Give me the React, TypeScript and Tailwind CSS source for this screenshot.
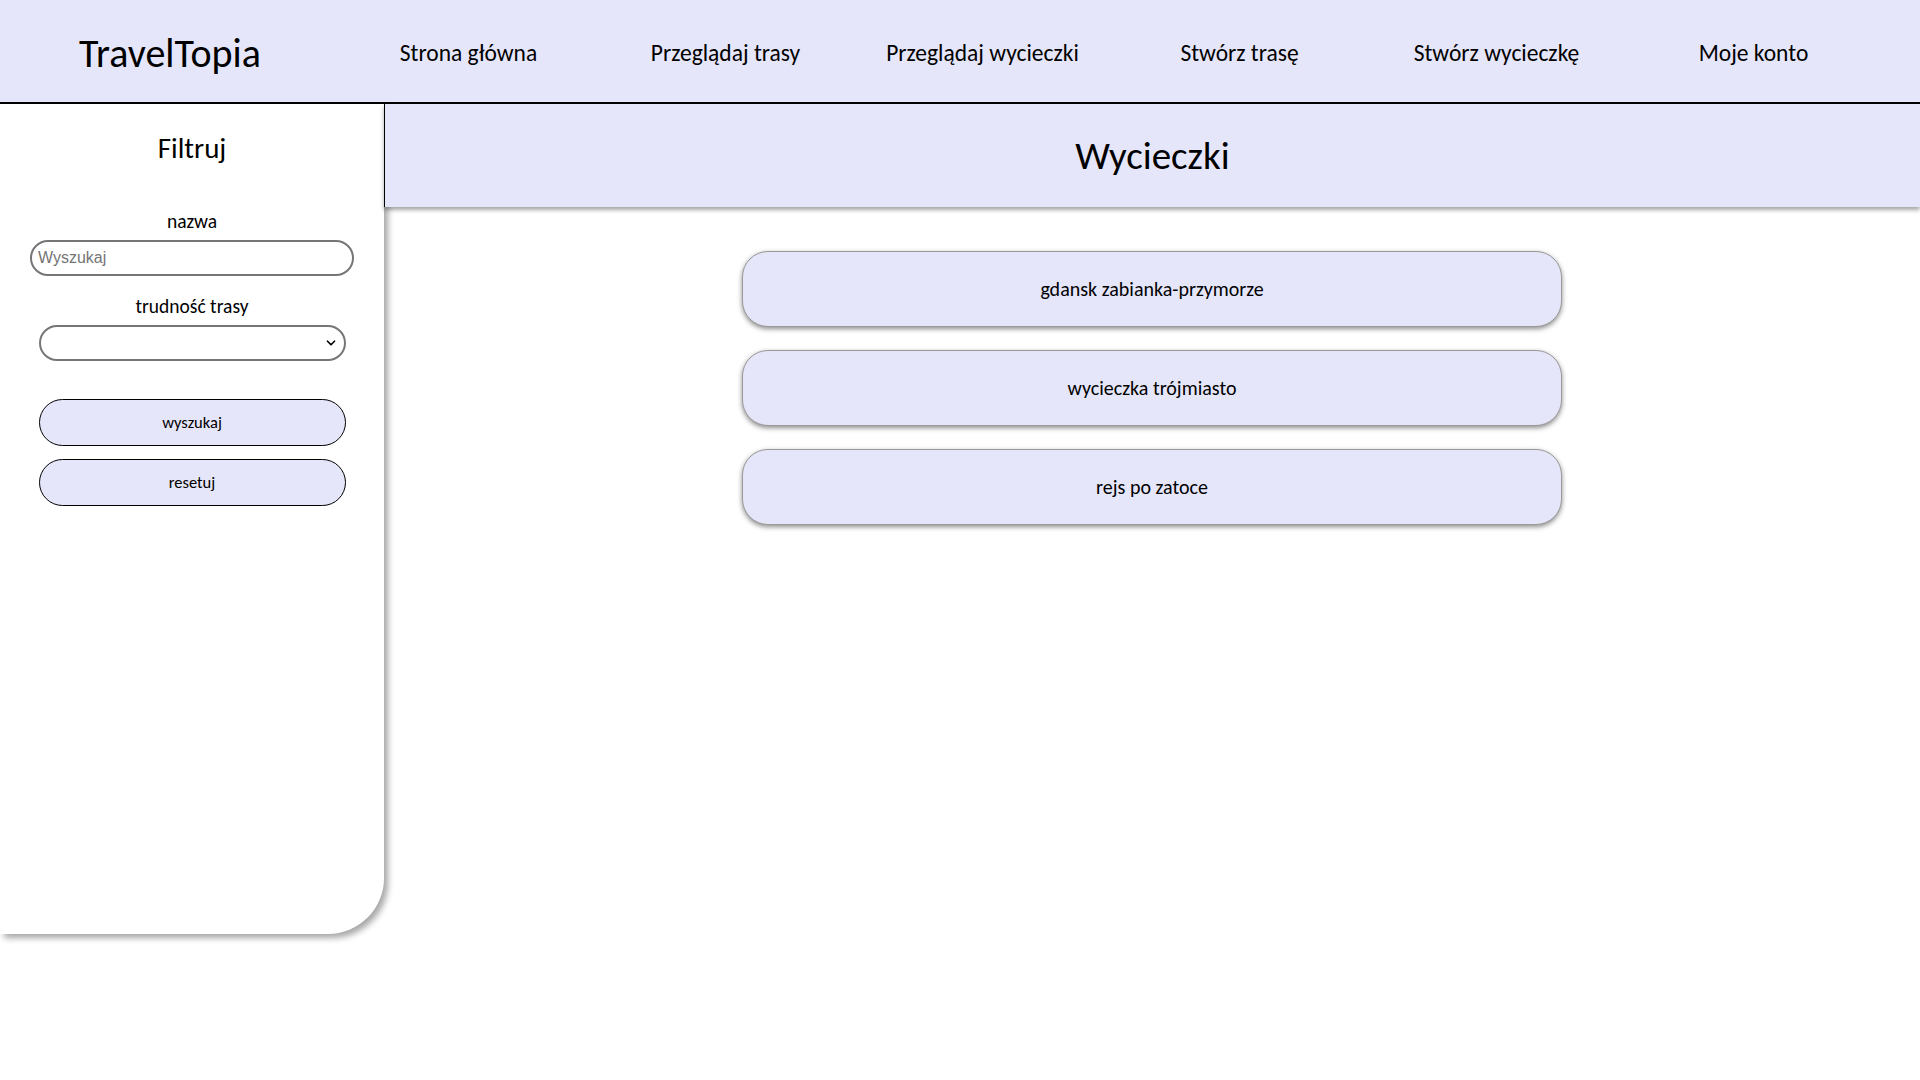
import { ChevronDown } from "lucide-react";

const navItems = [
  "Strona główna",
  "Przeglądaj trasy",
  "Przeglądaj wycieczki",
  "Stwórz trasę",
  "Stwórz wycieczkę",
  "Moje konto",
];

const trips = ["gdansk zabianka-przymorze", "wycieczka trójmiasto", "rejs po zatoce"];

const font = "[font-family:Carlito,Calibri,Lato,sans-serif]";

export default function App() {
  return (
    <div className={`min-h-screen w-full bg-white text-black ${font}`}>
      <header className="flex h-[104px] items-center border-b-2 border-black bg-[#e6e6fa] pt-[5px]">
        <div className="flex w-[340px] justify-center text-[40px] leading-none">TravelTopia</div>
        <nav className="flex">
          {navItems.map((item) => (
            <a key={item} href="#" className="w-[257px] text-center text-[23.5px]">
              {item}
            </a>
          ))}
        </nav>
      </header>

      <div className="flex items-start">
        <aside className="relative z-0 flex h-[830px] w-[384px] shrink-0 flex-col items-center rounded-br-[56px] bg-white shadow-[4px_4px_6px_rgba(0,0,0,0.35)]">
          <h2 className="mt-[30px] text-[29px] leading-none">Filtruj</h2>

          <label className="mt-[49px] text-[19.5px] leading-none">nazwa</label>
          <input
            type="text"
            placeholder="Wyszukaj"
            className="mt-[8px] h-[36px] w-[324px] rounded-full border-2 border-[#767676] px-[6px] text-[16px] [font-family:'Liberation_Sans',Arial,sans-serif] placeholder:text-[#757575] focus:outline-none"
          />

          <label className="mt-[21px] text-[19.5px] leading-none">trudność trasy</label>
          <div className="relative mt-[9px] w-[307px]">
            <select className="h-[36px] w-full appearance-none rounded-full border-2 border-[#767676] bg-white px-3 focus:outline-none">
              <option value=""></option>
            </select>
            <ChevronDown className="pointer-events-none absolute right-[8px] top-[11px] h-[14px] w-[14px]" strokeWidth={3} />
          </div>

          <button
            type="button"
            className="mt-[38px] h-[47px] w-[307px] rounded-full border border-black bg-[#e6e6fa] text-[16.5px]"
          >
            wyszukaj
          </button>
          <button
            type="button"
            className="mt-[13px] h-[47px] w-[307px] rounded-full border border-black bg-[#e6e6fa] text-[16.5px]"
          >
            resetuj
          </button>
        </aside>

        <main className="relative z-10 flex-1">
          <div className="flex h-[103px] items-center justify-center border-l border-black bg-[#e6e6fa] shadow-[0_3px_4px_rgba(0,0,0,0.35)]">
            <h1 className="text-[39px] leading-none">Wycieczki</h1>
          </div>

          <div className="mt-[44px] flex flex-col items-center gap-[23px]">
            {trips.map((trip) => (
              <div
                key={trip}
                className="flex h-[76px] w-[820px] items-center justify-center rounded-[26px] border border-[#9a9a9a] bg-[#e6e6fa] text-[20px] shadow-[0_2px_5px_rgba(0,0,0,0.45)]"
              >
                {trip}
              </div>
            ))}
          </div>
        </main>
      </div>
    </div>
  );
}
